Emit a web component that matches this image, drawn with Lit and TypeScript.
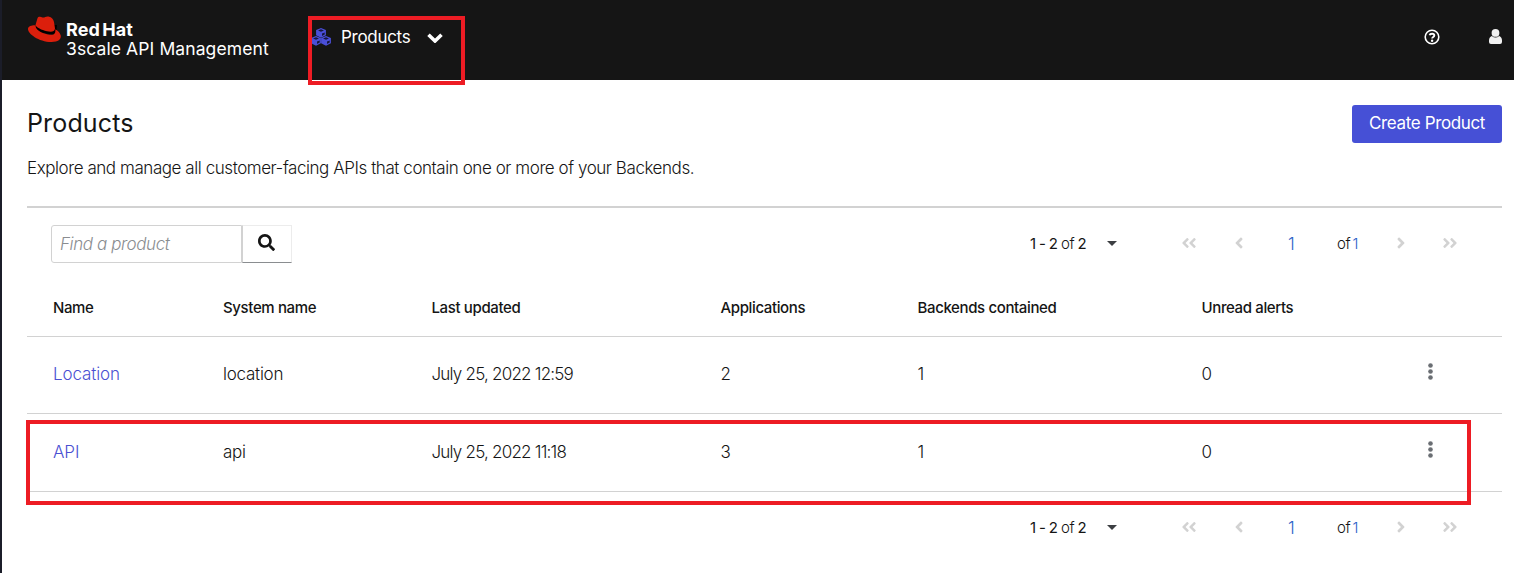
import { LitElement, html, css, svg } from "lit";
import { customElement } from "lit/decorators.js";

interface Product { name: string; system: string; updated: string; apps: number; backends: number; alerts: number; }

const products: Product[] = [
  { name: "Location", system: "location", updated: "July 25, 2022 12:59", apps: 2, backends: 1, alerts: 0 },
  { name: "API", system: "api", updated: "July 25, 2022 11:18", apps: 3, backends: 1, alerts: 0 },
];

const headings = ["Name", "System name", "Last updated", "Applications", "Backends contained", "Unread alerts"];

const ANGLE = "M31.7 239l136-136c9.4-9.4 24.6-9.4 33.9 0l22.6 22.6c9.4 9.4 9.4 24.6 0 33.9L127.9 256l96.4 96.4c9.4 9.4 9.4 24.6 0 33.9L201.7 409c-9.4 9.4-24.6 9.4-33.9 0l-136-136c-9.5-9.4-9.5-24.6-.1-34z";

const angle = (cls: string) => html`<svg class="ang ${cls}" viewBox="16 80 224 352">${svg`<path d=${ANGLE}/>`}</svg>`;

const cube = (x: number, y: number) => svg`<g transform="translate(${x} ${y})">
  <path d="M5 0 9.900 2V7.200L5 9.700.1 7.200V2Z" fill="#4a4fd8"/>
  <path d="M2 2.500 5 1.300 8 2.500 5 3.700Z M6 5.600 8.700 4.500V6.500L6 8Z" fill="#17173c"/></g>`;

@customElement("app-root")
export class AppRoot extends LitElement {
  static styles = css`
    :host { display: block; position: relative; width: 1514px; height: 573px; overflow: hidden; background: #fff;
      border-left: 2px solid #1b1d29; box-sizing: border-box; color: #151515;
      font: 300 17px/24px "Inter", "Liberation Sans", sans-serif; }
    * { box-sizing: border-box; }
    svg { display: block; }
    .top { display: flex; height: 80px; background: #151515; color: #fff; padding-left: 25px; }
    .hat { width: 36px; height: 28px; margin-top: 15px; }
    .brand { width: 275px; padding: 20px 0 0 3px; line-height: 19px; font-size: 17px; font-weight: 400; white-space: nowrap; }
    .brand b { display: block; font-weight: 700; font-size: 18px; letter-spacing: .05px; word-spacing: -2px; }
    .brand span { display: block; letter-spacing: .1px; font-size: 17.5px; }
    .ctx { display: flex; align-items: center; height: 74px; flex: 1; font-weight: 400; }
    .cubes { width: 20px; height: 18px; margin-right: 10px; margin-left: -27px; }
    .ctx-name { width: 72px; letter-spacing: -.3px; }
    .down { width: 16px; height: 10px; margin: 2px 0 0 14px; }
    .help { width: 16px; height: 16px; margin: 29px 49px 0 0; }
    .user { width: 13px; height: 15px; margin: 29px 12px 0 0; }
    .main { padding: 25px 12px 0 25px; }
    .head { display: flex; justify-content: space-between; height: 38px; }
    h1 { margin: 0; font-size: 25px; line-height: 37px; font-weight: 400; letter-spacing: .15px; }
    .create { background: #4650d6; color: #fff; border: 0; border-radius: 3px; width: 150px; height: 38px; text-align: center;
      font: inherit; font-weight: 400; line-height: 36px; padding: 0 0 2px; letter-spacing: -.36px; white-space: nowrap; }
    .lead { margin: 13px 0 0; height: 50px; white-space: nowrap; letter-spacing: -.435px; }
    .bar { border-top: 2px solid #d2d2d2; height: 73px; padding: 17px 0 0 24px; display: flex; justify-content: space-between; }
    .find { display: flex; }
    .input { width: 191px; height: 38px; border: 1px solid #d2d2d2; border-radius: 3px 0 0 3px; padding-left: 8px; line-height: 36px;
      font-style: italic; color: #8a8d90; letter-spacing: -.4px; }
    .go { width: 50px; height: 38px; border: 1px solid #ececec; border-left-color: #d2d2d2; border-bottom-color: #8a8d90; display: grid;
      place-items: center; padding: 0 1px 3px 0; }
    .go svg { width: 17px; height: 17px; fill: #151515; }
    .pager { display: grid; grid-template-columns: 77px 75px 53px 52px 50px 60px 46px 59px; height: 38px; align-items: center;
      font-size: 15px; white-space: nowrap; }
    .pager svg { margin-bottom: 2px; }
    .pager b { font-weight: 400; }
    .count { letter-spacing: -.3px; word-spacing: -.7px; }
    .total { letter-spacing: -.5px; word-spacing: -1.2px; }
    .caret { width: 10px; height: 5px; fill: #3c3f42; }
    .ang { width: 8px; height: 12px; fill: #d2d2d2; }
    .r { transform: scaleX(-1); }
    .dbl { display: flex; }
    .dbl .ang { width: 7px; }
    .num { color: #2b62c9; }
    .page { font-size: 17px; padding-left: 1px; }
    .row { display: grid; grid-template-columns: 170px 208.5px 289px 197px 284px 226.5px 1fr; padding-left: 26px; align-items: center;
      border-bottom: 1px solid #d2d2d2; height: 78px; padding-bottom: 1px; white-space: nowrap; letter-spacing: -.25px; }
    .row.th { height: 58px; padding-bottom: 0; font-size: 15px; font-weight: 500; letter-spacing: -.37px; }
    .row.first { height: 77px; padding-bottom: 3px; }
    .name { color: #4a50d2; letter-spacing: -.1px; }
    .date { letter-spacing: -.78px; }
    .kebab { width: 5px; height: 17px; fill: #6a6e73; margin-top: -4px; }
    .second .kebab { margin-top: -5px; }
    .foot { display: flex; justify-content: flex-end; padding-top: 17px; }
    .box { position: absolute; border: 4px solid #ed1c24; }
    .b1 { left: 306px; top: 16px; width: 157px; height: 69px; }
    .b2 { left: 24px; top: 420px; width: 1445px; height: 85px; }
  `;

  pager() {
    return html`<div class="pager"><span class="count"><b>1 - 2</b> of <b>2</b></span>
      <svg class="caret" viewBox="0 0 10 5"><path d="M0 0H10L5 5Z"/></svg>
      <span class="dbl">${angle("l")}${angle("l")}</span>${angle("l")}
      <span class="num page">1</span><span class="total">of <span class="num">1</span></span>${angle("r")}
      <span class="dbl">${angle("r")}${angle("r")}</span></div>`;
  }

  render() {
    return html`
      <div class="top">
        <svg class="hat" viewBox="0 0 36 28">
          <path fill="#000" d="M7 10 30 10 29 20 8 17Z"/>
          <path fill="#db1f0c" d="M8.800 10.200C5 10 1.500 10.900 1 13.400 .4 18.500 12 27 24.500 26.900 31 26.900 34.300 24.500 33.800 20.800 33.300 18 31 15.500 28.300 14.200 29 19.500 26 20.500 21 19.400 14 18 7.500 14 8.800 10.200Z"/>
          <path fill="#db1f0c" d="M8.500 10 10.500 3.200C11 1.800 13 1.300 15.500 2.400 17.500 3.200 18.300 1 21.500 1.500 25 2.200 26.200 4 27 7L28 13.400C27.800 17 24 17 20 16.200 14.500 15 9.500 12.600 8.500 10Z"/>
        </svg>
        <div class="brand"><b>Red Hat</b><span>3scale API Management</span></div>
        <div class="ctx">
          <svg class="cubes" viewBox="0 0 20 18">${cube(5, 0)}${cube(0, 8)}${cube(10, 8)}</svg>
          <span class="ctx-name">Products</span>
          <svg class="down" viewBox="0 0 16 10"><path d="M1.500 1.800 8 8 14.500 1.800" fill="none" stroke="#fff" stroke-width="3.600"/></svg>
        </div>
        <svg class="help" viewBox="0 0 16 16"><circle cx="8" cy="8" r="6.800" fill="none" stroke="#fff" stroke-width="1.600"/>
          <path d="M5.600 6.200C6 4.300 10.300 4 10.300 6.500 10.300 8 8.100 8 8.100 9.600" fill="none" stroke="#fff" stroke-width="1.900"/><circle cx="8.100" cy="11.800" r="1.200" fill="#fff"/></svg>
        <svg class="user" viewBox="0 0 13 15"><circle cx="6.500" cy="3.900" r="3.900" fill="#f0f0f0"/><path fill="#f0f0f0" d="M2.800 7Q6.500 10 10.200 7 13 8 13 11.500V13Q13 15 11 15H2Q0 15 0 13V11.500Q0 8 2.800 7Z"/></svg>
      </div>
      <div class="main">
        <div class="head"><h1>Products</h1><button class="create">Create Product</button></div>
        <p class="lead">Explore and manage all customer-facing APIs that contain one or more of your Backends.</p>
        <div class="bar">
          <div class="find"><div class="input">Find a product</div>
            <div class="go"><svg viewBox="0 0 512 512"><path d="M505 442.700L405.300 343c-4.500-4.500-10.600-7-17-7H372c27.600-35.300 44-79.700 44-128C416 93.100 322.900 0 208 0S0 93.100 0 208s93.100 208 208 208c48.300 0 92.700-16.400 128-44v16.300c0 6.400 2.500 12.500 7 17l99.700 99.700c9.400 9.400 24.600 9.400 33.900 0l28.300-28.300c9.400-9.400 9.400-24.600.1-34zM208 336c-70.700 0-128-57.200-128-128 0-70.700 57.200-128 128-128 70.700 0 128 57.200 128 128 0 70.700-57.200 128-128 128z"/></svg></div></div>
          ${this.pager()}
        </div>
        <div class="row th">${headings.map(t => html`<span>${t}</span>`)}</div>
        ${products.map((p, i) => html`<div class="row ${i ? "second" : "first"}">
          <span class="name">${p.name}</span><span>${p.system}</span><span class="date">${p.updated}</span><span>${p.apps}</span><span>${p.backends}</span><span>${p.alerts}</span>
          <svg class="kebab" viewBox="0 0 5 17"><circle cx="2.500" cy="2.500" r="2.300"/><circle cx="2.500" cy="8.500" r="2.300"/><circle cx="2.500" cy="14.500" r="2.300"/></svg></div>`)}
        <div class="foot">${this.pager()}</div>
      </div>
      <div class="box b1"></div><div class="box b2"></div>`;
  }
}
